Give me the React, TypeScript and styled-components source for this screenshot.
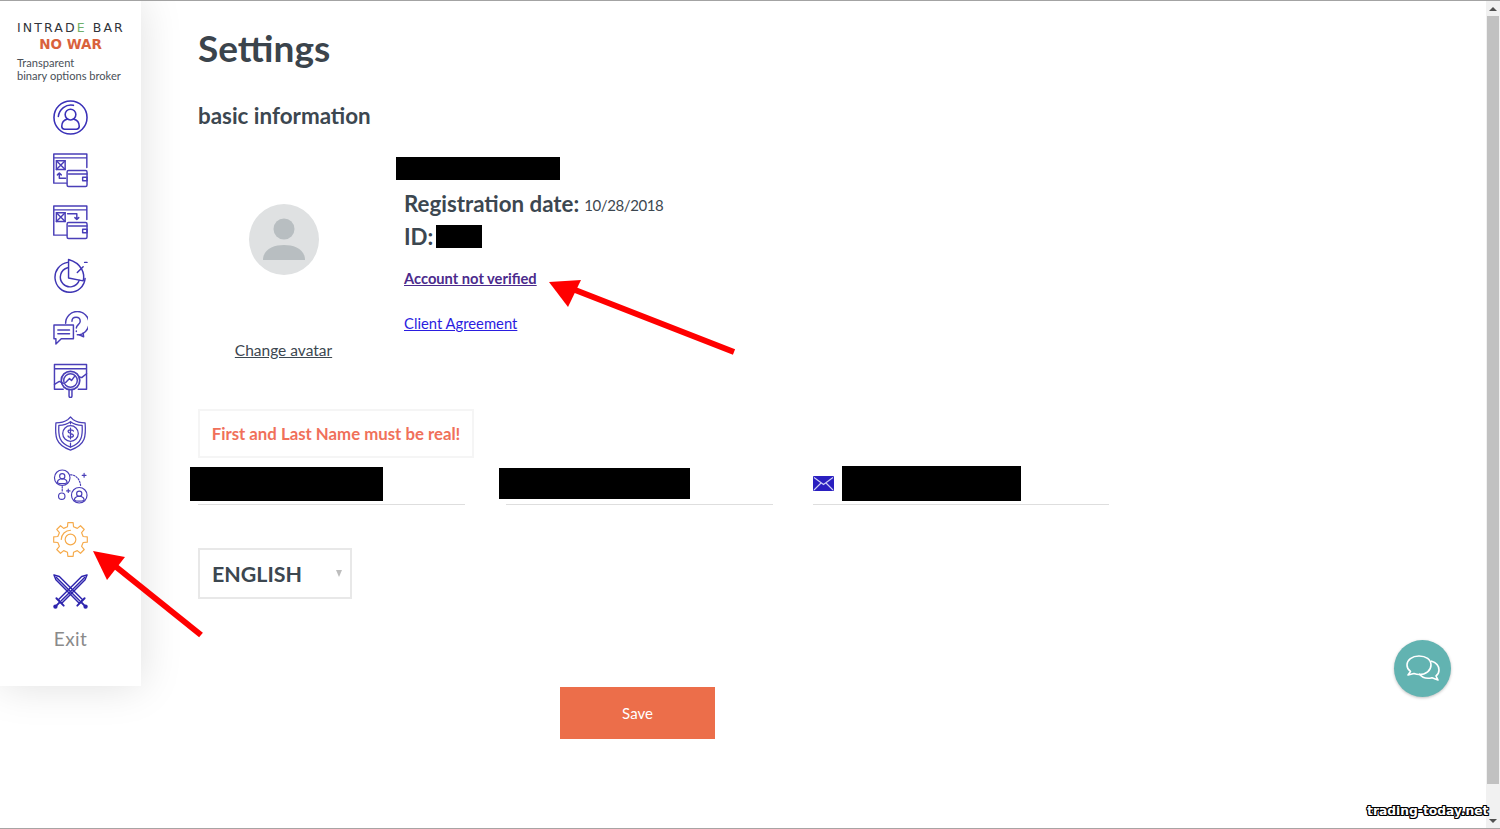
import React from "react";
import styled, { createGlobalStyle } from "styled-components";

const GlobalStyle = createGlobalStyle`
  html, body {
    margin: 0;
    padding: 0;
    background: #fff;
    overflow: hidden;
  }
  * {
    box-sizing: border-box;
  }
`;

const Page = styled.div`
  position: relative;
  display: flex;
  width: 1500px;
  height: 829px;
  overflow: hidden;
  border-top: 1px solid #a3a3a3;
  border-bottom: 1px solid #a8a4a4;
  font-family: Lato, "Open Sans", sans-serif;
  color: #3c4750;
`;

const Sidebar = styled.aside`
  flex: 0 0 141px;
  height: 685px;
  display: flex;
  flex-direction: column;
  background: #fff;
  box-shadow: 0 0 40px rgba(0, 0, 0, 0.13);
  padding: 19px 0 0;
`;

const Logo = styled.div`
  padding-left: 17px;
  height: 80px;
`;

const LogoMark = styled.div`
  font-family: "DejaVu Sans", sans-serif;
  font-size: 12.5px;
  line-height: 16px;
  letter-spacing: 2.1px;
  color: #30343a;
  white-space: nowrap;
  span {
    color: #6fb06a;
  }
`;

const NoWar = styled.div`
  width: 107px;
  text-align: center;
  font-family: "DejaVu Sans", sans-serif;
  font-size: 13.5px;
  line-height: 17px;
  font-weight: 700;
  color: #d9623c;
`;

const Tagline = styled.div`
  margin-top: 4px;
  font-size: 11.1px;
  line-height: 12.5px;
  color: #4a5058;
  white-space: nowrap;
`;

const Nav = styled.nav`
  display: flex;
  flex-direction: column;
  align-items: center;
  gap: 17.7px;
`;

const NavIcon = styled.svg<{ $tone?: string; $weight?: number }>`
  display: block;
  width: 35px;
  height: 35px;
  fill: none;
  stroke: ${(p) => p.$tone || "#4a3fb8"};
  stroke-width: ${(p) => p.$weight || 1.5};
  stroke-linecap: round;
  stroke-linejoin: round;
`;

const ExitLabel = styled.div`
  font-size: 19px;
  line-height: 24px;
  color: #8a8a8a;
  letter-spacing: 0.4px;
`;

const Main = styled.main`
  flex: 1;
  padding: 27px 0 0 57px;
`;

const Title = styled.h1`
  margin: 0;
  font-size: 37px;
  line-height: 40px;
  font-weight: 700;
  color: #3b444c;
`;

const SectionTitle = styled.h2`
  margin: 35px 0 0;
  font-size: 22.4px;
  line-height: 26px;
  font-weight: 700;
  color: #3c4750;
`;

const Profile = styled.section`
  display: flex;
  margin-top: 28px;
`;

const AvatarColumn = styled.div`
  width: 171px;
  display: flex;
  flex-direction: column;
  align-items: center;
  padding-top: 47px;
`;

const Avatar = styled.div`
  width: 70px;
  height: 71px;
  border-radius: 50%;
  background: #dfe1e2;
  overflow: hidden;
  svg {
    display: block;
    width: 100%;
    height: 100%;
    fill: #b8bec1;
  }
`;

const ChangeAvatar = styled.a`
  margin-top: 65px;
  font-size: 15.5px;
  line-height: 20px;
  color: #3c4750;
  text-decoration: underline;
`;

const Details = styled.div`
  margin-left: 35px;
  display: flex;
  flex-direction: column;
  align-items: flex-start;
`;

const Redacted = styled.div<{ $w: number; $h: number }>`
  width: ${(p) => p.$w}px;
  height: ${(p) => p.$h}px;
  background: #000;
  flex: none;
`;

const NameBar = styled(Redacted)`
  margin-left: -8px;
`;

const InfoLine = styled.div`
  display: flex;
  align-items: center;
  gap: 3px;
  height: 33px;
  font-size: 22.3px;
  font-weight: 700;
  white-space: nowrap;
`;

const DateText = styled.span`
  font-size: 15px;
  font-weight: 400;
  letter-spacing: -0.4px;
  margin-top: 3px;
  margin-left: 2px;
`;

const RegLine = styled(InfoLine)`
  margin-top: 7px;
`;

const LinkText = styled.a<{ $visited?: boolean }>`
  display: block;
  line-height: 20px;
  font-size: ${(p) => (p.$visited ? 14.7 : 14.8)}px;
  font-weight: ${(p) => (p.$visited ? 700 : 400)};
  color: ${(p) => (p.$visited ? "#4b2a8c" : "#2a1de0")};
  text-decoration: underline;
`;

const VerifyLink = styled(LinkText)`
  margin-top: 15px;
`;

const AgreementLink = styled(LinkText)`
  margin-top: 25px;
`;

const Notice = styled.div`
  margin-top: 49px;
  width: 276px;
  height: 49px;
  border: 2px solid #f5f5f5;
  display: flex;
  align-items: center;
  justify-content: center;
  font-size: 16.8px;
  font-weight: 700;
  color: #f0705a;
  white-space: nowrap;
`;

const Fields = styled.div`
  display: flex;
  margin-top: 8px;
`;

const Field = styled.div<{ $w: number; $gap?: number }>`
  width: ${(p) => p.$w}px;
  margin-left: ${(p) => p.$gap || 0}px;
  height: 39px;
  border-bottom: 1px solid #dedede;
  display: flex;
  align-items: center;
`;

const MailIcon = styled.svg`
  width: 21px;
  height: 15px;
  margin-right: 8px;
  margin-top: -4px;
  flex: none;
`;

const FirstBar = styled(Redacted)`
  margin: -3px 0 0 -8px;
`;

const SecondBar = styled(Redacted)`
  margin: -4px 0 0 -7px;
`;

const MailBar = styled(Redacted)`
  margin-top: -4px;
`;

const LangSelect = styled.div`
  margin-top: 43px;
  width: 154px;
  height: 51px;
  border: 2px solid #e8e8e8;
  padding-left: 12px;
  display: flex;
  align-items: center;
  font-size: 21.4px;
  font-weight: 700;
  color: #3c4750;
  position: relative;
  &::after {
    content: "";
    position: absolute;
    right: 8px;
    top: 20px;
    border-left: 3.5px solid transparent;
    border-right: 3.5px solid transparent;
    border-top: 7px solid #bdbdbd;
  }
`;

const SaveButton = styled.button`
  display: block;
  margin: 88px 0 0 362px;
  width: 155px;
  height: 52px;
  border: 0;
  background: #ec6e4a;
  color: #fff;
  font-family: inherit;
  font-size: 15px;
`;

const Scrollbar = styled.div`
  flex: 0 0 14px;
  height: 100%;
  display: flex;
  flex-direction: column;
  background: #f1f1f1;
`;

const ScrollButton = styled.div<{ $down?: boolean }>`
  flex: 0 0 15px;
  display: flex;
  align-items: center;
  justify-content: center;
  &::before {
    content: "";
    border-left: 4px solid transparent;
    border-right: 4px solid transparent;
    ${(p) =>
      p.$down
        ? "border-top: 4px solid #505050;"
        : "border-bottom: 4px solid #505050;"}
  }
`;

const ScrollThumb = styled.div`
  flex: 0 0 768px;
  margin: 0 1px;
  background: #c1c1c1;
`;

const ScrollTrack = styled.div`
  flex: 1;
`;

const ChatButton = styled.div`
  position: absolute;
  left: 1394px;
  top: 639px;
  width: 57px;
  height: 57px;
  border-radius: 50%;
  background: #62b3b1;
  box-shadow: 0 1px 3px rgba(0, 0, 0, 0.25);
  display: flex;
  align-items: center;
  justify-content: center;
  svg {
    width: 36px;
    height: 30px;
    fill: none;
    stroke: #fff;
    stroke-width: 1.6;
    stroke-linejoin: round;
  }
`;

const Watermark = styled.div`
  position: absolute;
  left: 1367px;
  top: 801px;
  font-family: "DejaVu Sans", sans-serif;
  font-size: 12.3px;
  line-height: 18px;
  font-weight: 700;
  color: #fff;
  white-space: nowrap;
  text-shadow: 1px 0 0 #000, -1px 0 0 #000, 0 1px 0 #000, 0 -1px 0 #000,
    1px 1px 0 #000, -1px -1px 0 #000, 1px -1px 0 #000, -1px 1px 0 #000;
`;

const Arrows = styled.svg`
  position: absolute;
  left: 0;
  top: -1px;
  width: 1500px;
  height: 829px;
  pointer-events: none;
`;

const gearPath = () => {
  const cx = 18;
  const cy = 18;
  const teeth = 8;
  const step = (Math.PI * 2) / teeth;
  const pts: string[] = [];
  for (let i = 0; i < teeth; i++) {
    const a = i * step - Math.PI / 2;
    [
      [-0.3, 13.4],
      [-0.2, 17.5],
      [0.2, 17.5],
      [0.3, 13.4],
    ].forEach(([o, r]) => {
      const t = a + o * step;
      pts.push(`${(cx + Math.cos(t) * r).toFixed(2)} ${(cy + Math.sin(t) * r).toFixed(2)}`);
    });
  }
  return `M${pts.join("L")}Z`;
};

const WalletBase = () => (
  <>
    <path d="M14 31H.8V1h34v14M.8 5h34" />
    <rect x="3.500" y="8" width="9" height="9" />
    <path d="M3.500 8l9 9M12.500 8l-9 9" />
    <rect x="14.500" y="18" width="20.500" height="16.500" rx="1.500" />
    <path d="M16 21.500h19M30.500 25h4.500v3.500h-4.500z" />
  </>
);

const IconProfile = () => (
  <NavIcon viewBox="0 0 36 36" $tone="#3a31b8" $weight={1.6}>
    <circle cx="18" cy="18" r="17" />
    <path d="M5.500 17A13 13 0 0 1 21 5.500" />
    <circle cx="18" cy="15" r="5.500" />
    <path d="M9 27c0-6 4-7 6-7.500M27 27c0-6-4-7-6-7.500M9 27c0 2 1 3 3 3h12c2 0 3-1 3-3" />
  </NavIcon>
);

const IconWithdraw = () => (
  <NavIcon viewBox="0 0 36 36">
    <WalletBase />
    <path d="M13 26H6.500v-5.500M4.500 22.500l2-2 2 2" />
  </NavIcon>
);

const IconDeposit = () => (
  <NavIcon viewBox="0 0 36 36">
    <WalletBase />
    <path d="M15 9h9.500v6M22.500 13l2 2 2-2" />
  </NavIcon>
);

const IconChart = () => (
  <NavIcon viewBox="0 0 36 36" $tone="#3f36b4">
    <path d="M15 4.500A15.500 15.500 0 1 0 33 21" />
    <path d="M15 10a10 10 0 1 0 12 13" />
    <path d="M16 1.500l0 19 15 3c2-7-1-18-15-22z" />
    <path d="M25 15l6-6M32.500 4.500h2.500" />
  </NavIcon>
);

const IconHelp = () => (
  <NavIcon viewBox="0 0 36 36">
    <path d="M13 12.500A12 12 0 1 1 25 24.500" />
    <path d="M19.500 10.500c0-5.500 8.500-5.500 8.500 0 0 3.500-4 3.500-4 7M24 20.500v.500M31 22.500l.500 4-4.500-2" />
    <path d="M1 14.500h20v14H8.500L3 34v-5.500H1z" />
    <path d="M5 19.500h12M5 23.500h12" />
  </NavIcon>
);

const IconAnalytics = () => (
  <NavIcon viewBox="0 0 36 36">
    <path d="M1.500 27V1.500h33V27M1.500 6h33M1.500 27h9M26 27h8.500" />
    <circle cx="18" cy="18" r="9.500" style={{ strokeWidth: 1.8 }} />
    <circle cx="18" cy="18" r="7" />
    <path d="M1.500 22l5-3 4 2M26.500 14l3 1 5-4M13 20l4-4 2 2 3-4" />
    <path d="M16.500 27.500v6.500a1.500 1.500 0 0 0 3 0v-6.500" />
  </NavIcon>
);

const IconShield = () => (
  <NavIcon viewBox="0 0 36 36" $weight={1.3}>
    <path d="M18 1l2.500 2.500C25 6.500 29 7 33 7c1 13 1 23-15 28C2 30 2 20 3 7c4 0 8-.500 12.500-3.500z" />
    <path d="M18 6c-3.500 2.500-7 3.500-12 3.700C5.500 20 6 28 18 32c12-4 12.500-12 12-22.300-5-.200-8.500-1.200-12-3.700z" />
    <circle cx="18" cy="18" r="8" />
    <path d="M18 6v2M18 28v4M21 15.500c-.500-1.500-5.500-2-5.500.500s5.500 1.500 5.500 4-5.500 2-5.500.500M18 12.500v11" />
  </NavIcon>
);

const IconUsers = () => (
  <NavIcon viewBox="0 0 36 36" $weight={1.2}>
    <circle cx="9.500" cy="9" r="8" />
    <circle cx="9.500" cy="7.500" r="2.700" />
    <path d="M4.500 14c0-3 2-3.500 3-3.800h4c1 .300 3 .800 3 3.800-2 1.500-8 1.500-10 0z" />
    <circle cx="27" cy="27" r="8" />
    <circle cx="27" cy="25.500" r="2.700" />
    <path d="M22 32c0-3 2-3.500 3-3.800h4c1 .300 3 .800 3 3.800-2 1.500-8 1.500-10 0z" />
    <circle cx="9" cy="28" r="3.300" />
    <path strokeDasharray="1.500 1.500" d="M18 6c6 0 10 5 10.500 12M9.500 18v6" />
    <path d="M30 6.500h4M32 4.500v4M14 22.500h3.500M15.700 20.700v3.500" />
  </NavIcon>
);

const IconGear = () => (
  <NavIcon viewBox="0 0 36 36" $tone="#f6ab4c" $weight={1.2}>
    <path d={gearPath()} />
    <circle cx="18" cy="18" r="5.500" />
    <path d="M8.500 18A9.500 9.500 0 0 1 18 8.500" />
  </NavIcon>
);

const IconSwords = () => (
  <NavIcon viewBox="0 0 36 36" $tone="#2d24ad">
    <path d="M1 1l5.500 1.500 24 24-3.500 3.500-24-24z" />
    <path d="M35 1l-5.500 1.500-24 24 3.500 3.500 24-24z" />
    <path d="M3.500 3.500l24 24M32.500 3.500l-24 24" />
    <path d="M3.500 25l7.500 7.500M32.500 25L25 32.500M6.500 29.500l-3 3M29.500 29.500l3 3" style={{ strokeWidth: 2 }} />
    <circle cx="2.500" cy="33.500" r="1.500" fill="#2d24ad" />
    <circle cx="33.500" cy="33.500" r="1.500" fill="#2d24ad" />
  </NavIcon>
);

export default function App() {
  return (
    <Page>
      <GlobalStyle />
      <Sidebar>
        <Logo>
          <LogoMark>
            INTRAD<span>E</span> BAR
          </LogoMark>
          <NoWar>NO WAR</NoWar>
          <Tagline>
            Transparent
            <br />
            binary options broker
          </Tagline>
        </Logo>
        <Nav>
          <IconProfile />
          <IconWithdraw />
          <IconDeposit />
          <IconChart />
          <IconHelp />
          <IconAnalytics />
          <IconShield />
          <IconUsers />
          <IconGear />
          <IconSwords />
          <ExitLabel>Exit</ExitLabel>
        </Nav>
      </Sidebar>

      <Main>
        <Title>Settings</Title>
        <SectionTitle>basic information</SectionTitle>

        <Profile>
          <AvatarColumn>
            <Avatar>
              <svg viewBox="0 0 70 71">
                <circle cx="35" cy="25" r="10.500" />
                <path d="M14 56c0-11 11-15 21-15s21 4 21 15z" />
              </svg>
            </Avatar>
            <ChangeAvatar>Change avatar</ChangeAvatar>
          </AvatarColumn>
          <Details>
            <NameBar $w={164} $h={23} />
            <RegLine>
              Registration date: <DateText>10/28/2018</DateText>
            </RegLine>
            <InfoLine>
              ID: <Redacted $w={46} $h={23} />
            </InfoLine>
            <VerifyLink $visited>Account not verified</VerifyLink>
            <AgreementLink>Client Agreement</AgreementLink>
          </Details>
        </Profile>

        <Notice>First and Last Name must be real!</Notice>

        <Fields>
          <Field $w={267}>
            <FirstBar $w={193} $h={34} />
          </Field>
          <Field $w={267} $gap={41}>
            <SecondBar $w={191} $h={31} />
          </Field>
          <Field $w={296} $gap={40}>
            <MailIcon viewBox="0 0 21 15">
              <rect width="21" height="15" rx="1" fill="#2a1fc0" />
              <path d="M1 1.500l9.500 7 9.500-7M1 14l7-7M20 14l-7-7" fill="none" stroke="#cfd0f5" strokeWidth="1.100" />
            </MailIcon>
            <MailBar $w={179} $h={35} />
          </Field>
        </Fields>

        <LangSelect>ENGLISH</LangSelect>

        <SaveButton>Save</SaveButton>
      </Main>

      <Scrollbar>
        <ScrollButton />
        <ScrollThumb />
        <ScrollTrack />
        <ScrollButton $down />
      </Scrollbar>

      <ChatButton>
        <svg viewBox="0 0 36 30">
          <path d="M14 2C7 2 2 6 2 11c0 3 1.500 5 3.500 6.500L3 21l6-1.500c2 .700 3.500 1 5 1 7 0 12-4 12-9.500S21 2 14 2z" />
          <path d="M26 7c5 1.500 8 5 8 9 0 2.500-1 4.500-3 6l2 4-6-2.300c-3 .800-9 1-13-4" />
        </svg>
      </ChatButton>

      <Watermark>trading-today.net</Watermark>

      <Arrows viewBox="0 0 1500 829">
        <path d="M734 352L570 288" stroke="#f00" strokeWidth="6" />
        <polygon points="549,282 581,280 568,307" fill="#f00" />
        <path d="M201 635L115 566" stroke="#f00" strokeWidth="6" />
        <polygon points="93,551 125,557 107,580" fill="#f00" />
      </Arrows>
    </Page>
  );
}
